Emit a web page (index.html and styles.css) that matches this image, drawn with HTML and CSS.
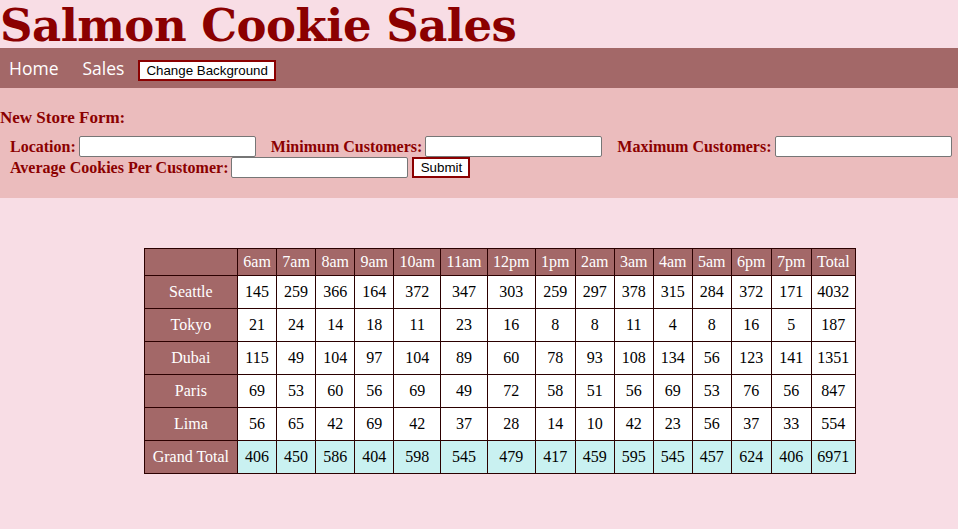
FILE: index.html
```html
<!DOCTYPE html>
<html>
<head>
<meta charset="utf-8">
<title>Salmon Cookie Sales</title>
<link rel="stylesheet" href="styles.css">
</head>
<body>
<header>
  <h1 class="title">Salmon Cookie Sales</h1>
  <nav class="nav">
    <a href="#" class="nav-link">Home</a>
    <a href="#" class="nav-link">Sales</a>
    <button class="btn bg-btn">Change Background</button>
  </nav>
</header>
<section class="form-section">
  <h3 class="form-title">New Store Form:</h3>
  <form class="store-form">
    <div class="field"><label>Location:</label><input type="text" class="inp"></div>
    <div class="field"><label>Minimum Customers:</label><input type="text" class="inp"></div>
    <div class="field"><label>Maximum Customers:</label><input type="text" class="inp"></div>
    <div class="field"><label>Average Cookies Per Customer:</label><input type="text" class="inp"><button type="button" class="btn submit">Submit</button></div>
  </form>
</section>
<main class="main">
<table class="sales">
  <thead>
    <tr><th class="corner"></th><th>6am</th><th>7am</th><th>8am</th><th>9am</th><th>10am</th><th>11am</th><th>12pm</th><th>1pm</th><th>2am</th><th>3am</th><th>4am</th><th>5am</th><th>6pm</th><th>7pm</th><th>Total</th></tr>
  </thead>
  <tbody>
    <tr><th class="row-h">Seattle</th><td>145</td><td>259</td><td>366</td><td>164</td><td>372</td><td>347</td><td>303</td><td>259</td><td>297</td><td>378</td><td>315</td><td>284</td><td>372</td><td>171</td><td>4032</td></tr>
    <tr><th class="row-h">Tokyo</th><td>21</td><td>24</td><td>14</td><td>18</td><td>11</td><td>23</td><td>16</td><td>8</td><td>8</td><td>11</td><td>4</td><td>8</td><td>16</td><td>5</td><td>187</td></tr>
    <tr><th class="row-h">Dubai</th><td>115</td><td>49</td><td>104</td><td>97</td><td>104</td><td>89</td><td>60</td><td>78</td><td>93</td><td>108</td><td>134</td><td>56</td><td>123</td><td>141</td><td>1351</td></tr>
    <tr><th class="row-h">Paris</th><td>69</td><td>53</td><td>60</td><td>56</td><td>69</td><td>49</td><td>72</td><td>58</td><td>51</td><td>56</td><td>69</td><td>53</td><td>76</td><td>56</td><td>847</td></tr>
    <tr><th class="row-h">Lima</th><td>56</td><td>65</td><td>42</td><td>69</td><td>42</td><td>37</td><td>28</td><td>14</td><td>10</td><td>42</td><td>23</td><td>56</td><td>37</td><td>33</td><td>554</td></tr>
  </tbody>
  <tfoot>
    <tr><th class="row-h">Grand Total</th><td>406</td><td>450</td><td>586</td><td>404</td><td>598</td><td>545</td><td>479</td><td>417</td><td>459</td><td>595</td><td>545</td><td>457</td><td>624</td><td>406</td><td>6971</td></tr>
  </tfoot>
</table>
</main>
</body>
</html>
```
FILE: styles.css
```css
html, body {
  margin: 0;
  padding: 0;
}
body {
  background: #f8dde5;
  font-family: "Liberation Serif", "Times New Roman", serif;
}
.title {
  margin: 0;
  height: 48px;
  font-family: "DejaVu Serif", serif;
  font-weight: bold;
  font-size: 45px;
  line-height: 52px;
  letter-spacing: -0.5px;
  color: #8b0000;
  white-space: nowrap;
  overflow: visible;
}
.nav {
  background: #a36868;
  height: 40px;
  display: flex;
  align-items: center;
  padding-left: 9px;
}
.nav-link {
  font-family: "Open Sans", sans-serif;
  font-size: 17.5px;
  color: #ffffff;
  text-decoration: none;
  margin-right: 24px;
}
.nav-link + .nav-link {
  margin-right: 14px;
}
.btn {
  font-family: "Liberation Sans", Arial, sans-serif;
  font-size: 13.33px;
  background: #ffffff;
  color: #000;
  border: 2px solid #8b0000;
  height: 21px;
  padding: 0 6px;
  line-height: 17px;
}
.bg-btn {
  align-self: flex-start;
  margin-top: 12px;
}
.form-section {
  background: #ebbcbd;
  height: 110px;
  padding-top: 20px;
  box-sizing: border-box;
}
.form-title {
  margin: 0 0 8px 0;
  font-size: 17px;
  font-weight: bold;
  color: #8b0000;
  line-height: 20px;
}
.store-form {
  display: flex;
  flex-wrap: wrap;
  column-gap: 15px;
  padding-left: 10px;
}
.field {
  display: flex;
  align-items: center;
  height: 21px;
}
.field label {
  font-weight: bold;
  font-size: 16px;
  color: #8b0000;
  margin-right: 3px;
}
.inp {
  width: 177px;
  height: 21px;
  box-sizing: border-box;
  border: 1px solid #767676;
  border-radius: 2px;
  background: #fff;
  padding: 1px 2px;
}
.submit {
  margin-left: 4px;
  width: 58px;
  padding: 0;
}
.main {
  padding-top: 50px;
}
.sales {
  margin-left: 15%;
  border-collapse: collapse;
  font-size: 16px;
}
.sales th, .sales td {
  border: 1px solid #2b0000;
  text-align: center;
  padding: 0 5.25px;
}
.sales thead th {
  background: #a36868;
  color: #ffffff;
  font-weight: normal;
  height: 26px;
}
.sales td {
  background: #ffffff;
  color: #000;
  height: 32px;
}
.sales .row-h {
  background: #a36868;
  color: #ffffff;
  font-weight: normal;
  padding: 0 8px;
}
.sales tfoot td {
  background: #c9f1f1;
}
```
